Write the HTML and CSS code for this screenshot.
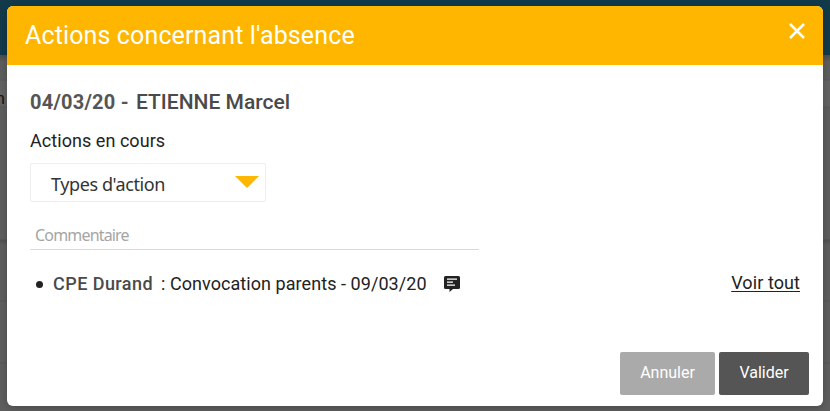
FILE: index.html
```html
<!DOCTYPE html>
<html lang="fr">
<head>
<meta charset="utf-8">
<title>Actions concernant l'absence</title>
<link rel="stylesheet" href="styles.css">
</head>
<body>
<div class="backdrop">
  <div class="topbar"></div>
  <div class="page"><span class="page-text">n</span></div>
</div>
<section class="modal">
  <header class="modal-header">
    <h1 class="modal-title">Actions concernant l'absence</h1>
    <svg class="close" viewBox="0 0 16 16"><path d="M1 1 15 15M15 1 1 15"/></svg>
  </header>
  <div class="modal-body">
    <h2 class="student"><span class="date">04/03/20 -</span><span class="name">ETIENNE Marcel</span></h2>
    <p class="subtitle">Actions en cours</p>
    <div class="select"><span class="select-label">Types d'action</span><span class="arrow"></span></div>
    <div class="comment"><span class="placeholder">Commentaire</span></div>
    <div class="action-row">
      <span class="bullet"></span>
      <span class="author">CPE Durand</span>
      <span class="detail">: Convocation parents - 09/03/20</span>
      <svg class="note" viewBox="0 0 16 16"><path fill="#222" d="M1.500 0h13Q16 0 16 1.500v10Q16 13 14.500 13H9L5.500 16V13h-4Q0 13 0 11.500v-10Q0 0 1.500 0Z"/><path fill="#fff" d="M3 2.500h10v1.300H3zM3 5.500h6v1.300H3zM3 8.500h8v1.300H3z"/></svg>
      <a class="see-all">Voir tout</a>
    </div>
    <footer class="buttons">
      <button class="button cancel"><span>Annuler</span></button>
      <button class="button confirm"><span>Valider</span></button>
    </footer>
  </div>
</section>
</body>
</html>
```
FILE: styles.css
```css
* { box-sizing: border-box; }
body { margin: 0; width: 830px; height: 411px; overflow: hidden; padding: 6px 7px 5px; font-family: Roboto, sans-serif; font-size: 18px; color: #222; }
h1, h2, p { margin: 0; }
.backdrop { position: absolute; inset: 0; z-index: -1; background: #5e5e5e; }
.topbar { height: 55px; background: #123a4b; }
.page { height: 356px; padding-top: 29px; background: linear-gradient(#4c4c4c, #5e5e5e 7px, #5e5e5e 24px, #595959 25px, #636363 26px, #636363 51px, #595959 52px, #5e5e5e 53px, #5e5e5e 184px, #505050 185px, #5e5e5e 190px, #5e5e5e 245px, #555 246px, #5e5e5e 247px, #5e5e5e 307px, #555 308px, #5e5e5e 309px); }
.page-text { display: block; margin-left: -4px; font-size: 16px; line-height: 30px; color: #111; }
.modal { height: 400px; border-radius: 6px; overflow: hidden; background: #fff; box-shadow: 0 2px 8px rgba(0, 0, 0, .22); }
.modal-header { height: 59px; padding: 0 18px; display: flex; justify-content: space-between; background: #ffb600; }
.modal-title { font-size: 25px; font-weight: 400; line-height: 59px; letter-spacing: .13px; color: #fff; }
.close { width: 16px; height: 16px; margin-top: 17px; fill: none; stroke: #fff; stroke-width: 2.5; }
.modal-body { padding: 22px 14px 0 23px; }
.student { display: flex; height: 30px; line-height: 30px; font-size: 20px; font-weight: 500; color: #4a4a4a; }
.date { width: 106px; font-weight: 700; letter-spacing: .22px; color: #555; }
.name { font-size: 21px; }
.subtitle { margin-top: 11px; line-height: 26px; letter-spacing: .05px; }
.select { width: 236px; height: 39px; margin-top: 9px; padding: 0 6px 0 20px; display: flex; justify-content: space-between; align-items: center; border: 1px solid #eee; border-radius: 2px; }
.select-label { font: 18px/38px "Noto Sans", sans-serif; letter-spacing: -.4px; padding-top: 2px; color: #333; }
.arrow { margin-bottom: 2px; border: 12px solid transparent; border-top-color: #ffb600; border-bottom: 0; }
.comment { width: 449px; height: 48px; padding: 18px 0 0 5px; border-bottom: 1px solid #d9d9d9; }
.placeholder { display: block; font: 16px/30px "Noto Sans", sans-serif; letter-spacing: -.82px; color: #a5a5a5; }
.action-row { display: flex; align-items: center; height: 30px; margin: 19px 9px 0 6px; line-height: 30px; white-space: nowrap; }
.bullet { width: 7px; height: 7px; margin-right: 10px; border-radius: 50%; background: #222; }
.author { width: 108px; font-weight: 500; letter-spacing: .45px; color: #4a4a4a; }
.detail { letter-spacing: .06px; }
.note { width: 16px; height: 16px; margin-left: 17px; }
.see-all { margin: -2px 0 0 auto; letter-spacing: .08px; text-decoration: underline; text-underline-offset: 2px; }
.buttons { display: flex; justify-content: flex-end; gap: 4px; margin-top: 53px; }
.button { height: 43px; padding: 0 0 2px; border: 0; border-radius: 2px; font: 16px Roboto, sans-serif; color: #fff; }
.cancel { width: 95px; background: #aaa; }
.confirm { width: 90px; background: #555; }
```
